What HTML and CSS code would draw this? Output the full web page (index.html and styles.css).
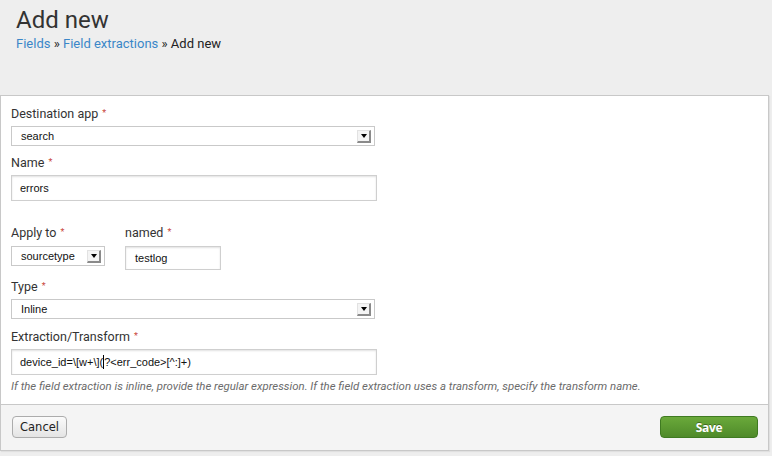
FILE: index.html
```html
<!DOCTYPE html>
<html>
<head>
<meta charset="utf-8">
<link rel="stylesheet" href="styles.css">
</head>
<body>
<div class="header">
  <h1 class="title">Add new</h1>
  <div class="crumbs"><a class="link">Fields</a> » <a class="link">Field extractions</a> » Add new</div>
</div>
<div class="card">
  <div class="body">
    <div class="field f-dest">
      <div class="label">Destination app <span class="req">*</span></div>
      <div class="select wide"><span class="val">search</span><span class="arrow"></span></div>
    </div>
    <div class="field f-name">
      <div class="label">Name <span class="req">*</span></div>
      <div class="input wide2"><span class="val">errors</span></div>
    </div>
    <div class="row f-apply">
      <div class="field">
        <div class="label">Apply to <span class="req">*</span></div>
        <div class="select small"><span class="val">sourcetype</span><span class="arrow"></span></div>
      </div>
      <div class="field">
        <div class="label">named <span class="req">*</span></div>
        <div class="input short"><span class="val">testlog</span></div>
      </div>
    </div>
    <div class="field f-type">
      <div class="label">Type <span class="req">*</span></div>
      <div class="select wide"><span class="val">Inline</span><span class="arrow"></span></div>
    </div>
    <div class="field f-ext">
      <div class="label">Extraction/Transform <span class="req">*</span></div>
      <div class="input wide2"><span class="val">device_id=\[w+\](<span class="caret"></span>?&lt;err_code&gt;[^:]+)</span></div>
      <div class="help">If the field extraction is inline, provide the regular expression. If the field extraction uses a transform, specify the transform name.</div>
    </div>
  </div>
  <div class="footer">
    <button class="btn cancel">Cancel</button>
    <button class="btn save">Save</button>
  </div>
</div>
</body>
</html>
```
FILE: styles.css
```css
html, body {
  margin: 0;
  padding: 0;
  background: #eeeeee;
}
body {
  width: 772px;
  height: 456px;
  overflow: hidden;
  font-family: Roboto, "Liberation Sans", sans-serif;
  color: #333;
}
.header {
  padding: 6px 16px 0 16px;
  height: 95px;
  box-sizing: border-box;
}
.title {
  margin: 0;
  font-size: 24px;
  line-height: 29px;
  font-weight: 400;
  color: #333;
}
.crumbs {
  font-size: 13px;
  line-height: 18px;
  color: #222;
}
.link {
  color: #3b87c8;
  text-decoration: none;
}
.card {
  width: 769px;
  box-sizing: border-box;
  border: 1px solid #c8c8c8;
  background: #fff;
  box-shadow: 1px 1px 1px rgba(0,0,0,0.06);
}
.body {
  padding: 10px 10px 11px 10px;
}
.label {
  font-size: 12.5px;
  line-height: 16px;
  color: #333;
  margin-bottom: 4px;
}
.req {
  color: #c9473d;
  font-size: 9px;
  line-height: 0;
  position: relative;
  top: -2px;
  margin-left: 1px;
}
.field { display: block; }
.f-name { margin-top: 9px; }
.f-apply { margin-top: 24px; display: flex; gap: 20px; }
.f-apply .label { margin-bottom: 5px; }
.f-type { margin-top: 9px; }
.f-ext { margin-top: 10px; }
.select {
  box-sizing: border-box;
  height: 20px;
  border: 1px solid #c9c9c9;
  background: #fff;
  display: flex;
  align-items: center;
  justify-content: space-between;
  padding: 0 3px 0 9px;
  font-family: "Liberation Sans", Arial, sans-serif;
  font-size: 11px;
  color: #111;
}
.wide { width: 364px; }
.small { width: 94px; }
.arrow {
  width: 14px;
  height: 13px;
  box-sizing: border-box;
  background: #f4f4f4;
  border-right: 2px solid #8a8a8a;
  border-bottom: 2px solid #8a8a8a;
  border-top: 1px solid #e2e2e2;
  border-left: 1px solid #e2e2e2;
  display: flex;
  align-items: center;
  justify-content: center;
}
.arrow::after {
  content: "";
  width: 0;
  height: 0;
  border-left: 3px solid transparent;
  border-right: 3px solid transparent;
  border-top: 4px solid #000;
}
.input {
  box-sizing: border-box;
  height: 26px;
  border: 1px solid #cfcfcf;
  box-shadow: inset 0 1px 2px rgba(0,0,0,0.12);
  background: #fff;
  display: flex;
  align-items: center;
  padding: 0 8px;
  font-family: "Liberation Sans", Arial, sans-serif;
  font-size: 11px;
  color: #111;
}
.wide2 { width: 366px; }
.short { width: 96px; height: 24px; padding: 0 9px; }
.caret {
  display: inline-block;
  width: 1px;
  height: 14px;
  background: #000;
  vertical-align: -3px;
}
.help {
  margin-top: 4px;
  font-size: 11.4px;
  line-height: 14px;
  font-style: italic;
  color: #6b6b6b;
  white-space: nowrap;
}
.footer {
  border-top: 1px solid #c8c8c8;
  background: #f4f4f4;
  height: 46px;
  box-sizing: border-box;
  padding: 11px 10px 0 11px;
  display: flex;
  justify-content: space-between;
  align-items: flex-start;
}
.btn {
  height: 22px;
  box-sizing: border-box;
  border-radius: 4px;
  margin: 0;
  padding: 0;
  cursor: pointer;
}
.cancel {
  width: 55px;
  border: 1px solid #acacac;
  background: linear-gradient(#fbfbfb, #e4e4e4);
  font-family: "DejaVu Sans", "Liberation Sans", sans-serif;
  font-size: 11.5px;
  color: #222;
}
.save {
  width: 98px;
  border: 1px solid #3f7a21;
  background: linear-gradient(#6aa93a, #4f8a2a);
  font-family: "Open Sans", "Liberation Sans", sans-serif;
  font-weight: 700;
  font-size: 12px;
  letter-spacing: -0.3px;
  color: #fff;
  text-shadow: 0 -1px 0 rgba(0,0,0,0.35);
}
```
